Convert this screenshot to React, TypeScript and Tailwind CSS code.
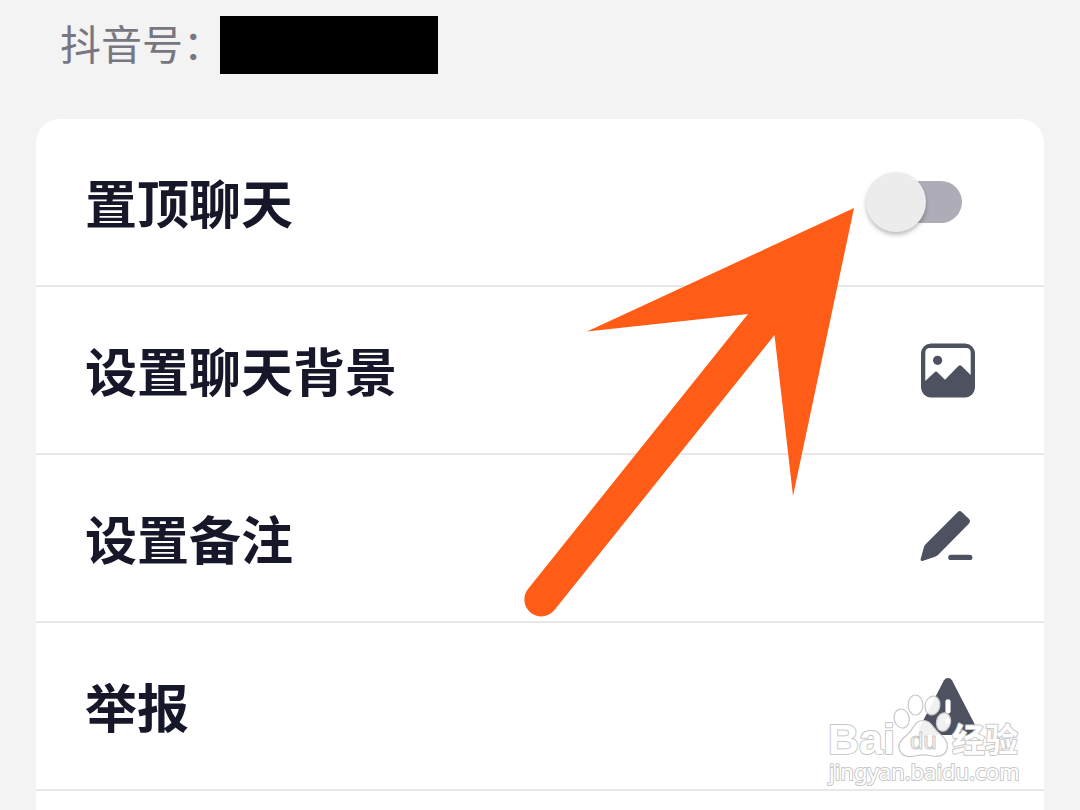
import type { ReactNode } from "react";

function ImageIcon() {
  return (
    <svg viewBox="0 0 56 56" className="size-14" aria-hidden="true">
      <rect x="1" y="1.5" width="54" height="54" rx="10" fill="#4d5160" />
      <path
        d="M10 6H46Q50.7 6 50.7 10.5V33L41.6 24Q40 22.4 38.4 24L25 37.7L17.6 30.4Q16 28.8 14.4 30.4L5.3 39V10.5Q5.3 6 10 6Z"
        fill="#fff"
      />
      <circle cx="17.6" cy="18.3" r="4.6" fill="#4d5160" />
    </svg>
  );
}

function PencilIcon() {
  return (
    <svg viewBox="0 0 56 56" className="size-14" fill="#4d5160" aria-hidden="true">
      <path d="M37.8 1.9Q39.8 .2 41.8 1.9L49.3 9.2Q51 11.2 49.3 13.2L18.5 44.6Q17 46.2 15 46.8L2.4 50.9Q.3 51.3 .6 49.2L3.8 37.4Q4.3 35.6 5.6 34.2Z" />
      <rect x="28.2" y="44.7" width="24.2" height="5.4" rx="2.7" />
    </svg>
  );
}

function AlertIcon() {
  return (
    <svg viewBox="0 0 56 56" className="size-14 overflow-visible" aria-hidden="true">
      <path
        d="M24 2.2Q25.4 0 28 0Q30.6 0 32 2.2L56.4 49.6Q58.6 56.8 51.6 57H4.4Q-2.6 56.8 -.4 49.6Z"
        fill="#4d5160"
      />
      <rect x="25.4" y="21.2" width="5.2" height="14.4" rx="2.4" fill="#fff" />
      <circle cx="28" cy="42.8" r="2.7" fill="#fff" />
    </svg>
  );
}

function Row({ label, children }: { label: string; children: ReactNode }) {
  return (
    <li className="border-b-2 border-[#e8e8e9]">
      <button type="button" className="flex h-[166px] w-full items-center justify-between pr-[68px] pl-[49px] text-left">
        <span>{label}</span>
        {children}
      </button>
    </li>
  );
}

function PinRow() {
  return (
    <li className="border-b-2 border-[#e8e8e9]">
      <label className="flex h-[166px] items-center justify-between pr-[82px] pl-[49px]">
        <span>置顶聊天</span>
        <span className="relative flex h-[60px] w-24 items-center">
          <input type="checkbox" role="switch" className="peer sr-only" />
          <span className="ml-2 h-[42px] flex-1 rounded-full bg-[#aeacb7]" />
          <span className="absolute left-0 size-[60px] rounded-full bg-[#ececec] shadow-[0_3px_4px_rgba(0,0,0,0.25)] peer-checked:left-9" />
        </span>
      </label>
    </li>
  );
}

function Arrow() {
  return (
    <svg
      viewBox="0 0 332 412"
      className="pointer-events-none absolute top-[206px] left-[523px] h-[412px] w-[332px]"
      fill="#ff5c17"
      aria-hidden="true"
    >
      <path d="M331 2L270 290L251.500 129L31.500 404A16.500 16.500 0 0 1 5 383L225 108L64 125.500Z" />
    </svg>
  );
}

function Watermark() {
  return (
    <svg
      viewBox="0 0 204 98"
      className="pointer-events-none absolute top-[692px] left-[824px] h-[98px] w-[204px]"
      fill="#fff"
      stroke="#c8c8c8"
      strokeLinejoin="round"
    >
      <g strokeWidth="1.2" fillOpacity=".92">
        <ellipse cx="77.700" cy="26.500" rx="7.500" ry="9.600" transform="rotate(-14 77.700 26.500)" />
        <ellipse cx="91.500" cy="13" rx="7.400" ry="10" />
        <ellipse cx="108.500" cy="13.500" rx="7.400" ry="9.500" transform="rotate(12 108.500 13.500)" />
        <ellipse cx="119.500" cy="30" rx="7" ry="9.300" transform="rotate(12 119.500 30)" />
        <path d="M99 28.500C90 28.500 91 36 83 43C76 48 73 53 76 59C79 66 87 65 93 63.500Q99 62.300 106 63.500C114 65.500 121 64 123 57C124.500 50 121 46 116 42C108 36 108 28.500 99 28.500Z" />
      </g>
      <g className="font-bold [paint-order:stroke]" strokeWidth="2">
        <text x="4" y="62" fontSize="43" className="font-['Liberation_Sans',sans-serif]">Bai</text>
        <text x="128" y="60" fontSize="33" className="font-['Noto_Sans_CJK_SC',sans-serif]">经验</text>
      </g>
      <text x="86" y="57" fontSize="24" strokeWidth="1" className="font-['Liberation_Sans',sans-serif]">du</text>
      <text x="5" y="88" fontSize="22" strokeWidth="2" className="font-['Noto_Sans',sans-serif] [paint-order:stroke]">
        jingyan.baidu.com
      </text>
    </svg>
  );
}

export default function App() {
  return (
    <main className="relative flex min-h-screen flex-col bg-[#f3f3f3] font-['Noto_Sans_CJK_SC',sans-serif]">
      <header className="flex items-start pt-4 pl-[60px]">
        <p className="w-40 text-[41px] leading-[52px] whitespace-nowrap text-[#777681]">抖音号：</p>
        <div className="relative h-[58px] w-[218px] bg-black" />
      </header>
      <ul className="mx-9 mt-[45px] flex-1 rounded-t-3xl bg-white text-[52px] leading-[60px] font-bold text-[#161829]">
        <PinRow />
        <Row label="设置聊天背景">
          <ImageIcon />
        </Row>
        <Row label="设置备注">
          <PencilIcon />
        </Row>
        <Row label="举报">
          <AlertIcon />
        </Row>
      </ul>
      <Arrow />
      <Watermark />
    </main>
  );
}
